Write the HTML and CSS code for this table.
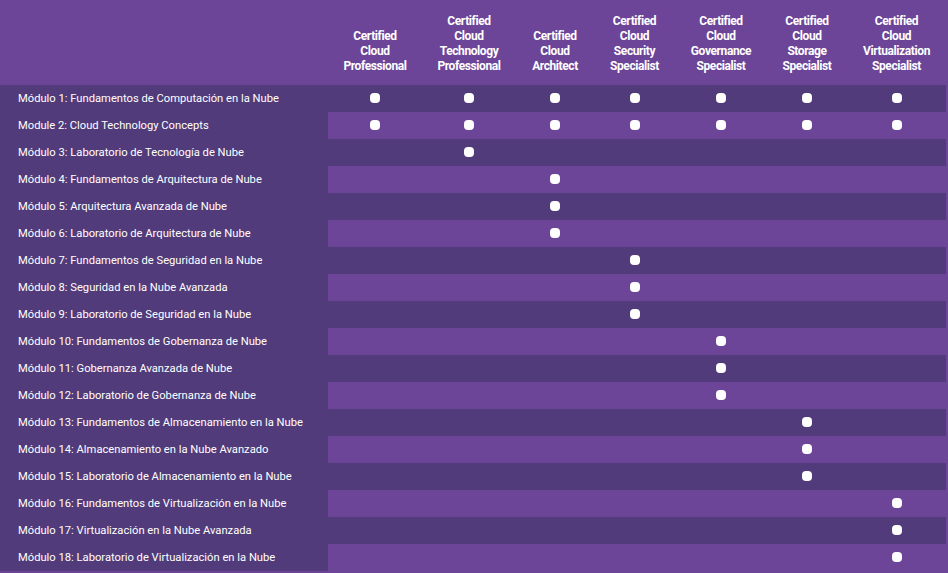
FILE: index.html
```html
<!DOCTYPE html>
<html lang="es">
<head>
<meta charset="utf-8">
<title>Módulos y certificaciones</title>
<link rel="stylesheet" href="styles.css">
</head>
<body>
<table class="matrix">
  <colgroup>
    <col class="c-mod">
    <col class="c1"><col class="c2"><col class="c3"><col class="c4"><col class="c5"><col class="c6"><col class="c7">
  </colgroup>
  <thead>
    <tr>
      <th class="corner"></th>
      <th>Certified<br>Cloud<br>Professional</th>
      <th>Certified<br>Cloud<br>Technology<br>Professional</th>
      <th>Certified<br>Cloud<br>Architect</th>
      <th>Certified<br>Cloud<br>Security<br>Specialist</th>
      <th>Certified<br>Cloud<br>Governance<br>Specialist</th>
      <th>Certified<br>Cloud<br>Storage<br>Specialist</th>
      <th>Certified<br>Cloud<br>Virtualization<br>Specialist</th>
    </tr>
  </thead>
  <tbody>
    <tr><td class="mod">Módulo 1: Fundamentos de Computación en la Nube</td><td><span class="dot"></span></td><td><span class="dot"></span></td><td><span class="dot"></span></td><td><span class="dot"></span></td><td><span class="dot"></span></td><td><span class="dot"></span></td><td><span class="dot"></span></td></tr>
    <tr><td class="mod">Module 2: Cloud Technology Concepts</td><td><span class="dot"></span></td><td><span class="dot"></span></td><td><span class="dot"></span></td><td><span class="dot"></span></td><td><span class="dot"></span></td><td><span class="dot"></span></td><td><span class="dot"></span></td></tr>
    <tr><td class="mod">Módulo 3: Laboratorio de Tecnología de Nube</td><td></td><td><span class="dot"></span></td><td></td><td></td><td></td><td></td><td></td></tr>
    <tr><td class="mod">Módulo 4: Fundamentos de Arquitectura de Nube</td><td></td><td></td><td><span class="dot"></span></td><td></td><td></td><td></td><td></td></tr>
    <tr><td class="mod">Módulo 5: Arquitectura Avanzada de Nube</td><td></td><td></td><td><span class="dot"></span></td><td></td><td></td><td></td><td></td></tr>
    <tr><td class="mod">Módulo 6: Laboratorio de Arquitectura de Nube</td><td></td><td></td><td><span class="dot"></span></td><td></td><td></td><td></td><td></td></tr>
    <tr><td class="mod">Módulo 7: Fundamentos de Seguridad en la Nube</td><td></td><td></td><td></td><td><span class="dot"></span></td><td></td><td></td><td></td></tr>
    <tr><td class="mod">Módulo 8: Seguridad en la Nube Avanzada</td><td></td><td></td><td></td><td><span class="dot"></span></td><td></td><td></td><td></td></tr>
    <tr><td class="mod">Módulo 9: Laboratorio de Seguridad en la Nube</td><td></td><td></td><td></td><td><span class="dot"></span></td><td></td><td></td><td></td></tr>
    <tr><td class="mod">Módulo 10: Fundamentos de Gobernanza de Nube</td><td></td><td></td><td></td><td></td><td><span class="dot"></span></td><td></td><td></td></tr>
    <tr><td class="mod">Módulo 11: Gobernanza Avanzada de Nube</td><td></td><td></td><td></td><td></td><td><span class="dot"></span></td><td></td><td></td></tr>
    <tr><td class="mod">Módulo 12: Laboratorio de Gobernanza de Nube</td><td></td><td></td><td></td><td></td><td><span class="dot"></span></td><td></td><td></td></tr>
    <tr><td class="mod">Módulo 13: Fundamentos de Almacenamiento en la Nube</td><td></td><td></td><td></td><td></td><td></td><td><span class="dot"></span></td><td></td></tr>
    <tr><td class="mod">Módulo 14: Almacenamiento en la Nube Avanzado</td><td></td><td></td><td></td><td></td><td></td><td><span class="dot"></span></td><td></td></tr>
    <tr><td class="mod">Módulo 15: Laboratorio de Almacenamiento en la Nube</td><td></td><td></td><td></td><td></td><td></td><td><span class="dot"></span></td><td></td></tr>
    <tr><td class="mod">Módulo 16: Fundamentos de Virtualización en la Nube</td><td></td><td></td><td></td><td></td><td></td><td></td><td><span class="dot"></span></td></tr>
    <tr><td class="mod">Módulo 17: Virtualización en la Nube Avanzada</td><td></td><td></td><td></td><td></td><td></td><td></td><td><span class="dot"></span></td></tr>
    <tr><td class="mod">Módulo 18: Laboratorio de Virtualización en la Nube</td><td></td><td></td><td></td><td></td><td></td><td></td><td><span class="dot"></span></td></tr>
  </tbody>
</table>
</body>
</html>
```
FILE: styles.css
```css
html, body {
  margin: 0;
  padding: 0;
}
body {
  background: #6c4598;
  padding-top: 1px;
  font-family: Roboto, "Liberation Sans", Arial, sans-serif;
  color: #fff;
}
.matrix {
  border-collapse: collapse;
  table-layout: fixed;
  width: 946px;
}
.c-mod { width: 328px; }
.c1 { width: 94px; }
.c2 { width: 94px; }
.c3 { width: 78px; }
.c4 { width: 81px; }
.c5 { width: 92px; }
.c6 { width: 80px; }
.c7 { width: 99px; }

.matrix th {
  height: 84px;
  padding: 0 0 11px;
  box-sizing: border-box;
  vertical-align: bottom;
  text-align: center;
  font-size: 12px;
  line-height: 15px;
  font-weight: 700;
  letter-spacing: -0.4px;
  background: #6c4598;
}
.matrix td {
  height: 27px;
  padding: 0;
  text-align: center;
  vertical-align: middle;
}
.matrix tbody tr:nth-child(odd) td { background: #513b7a; }
.matrix tbody tr:nth-child(even) td { background: #6c4598; }
.matrix tbody tr td.mod {
  background: #513b7a;
  text-align: left;
  padding-left: 18px;
  font-size: 11.2px;
  line-height: 14px;
  white-space: nowrap;
}
.dot {
  display: block;
  margin: -1px auto 0;
  width: 10px;
  height: 10px;
  border-radius: 4px;
  background: #fff;
}
```
